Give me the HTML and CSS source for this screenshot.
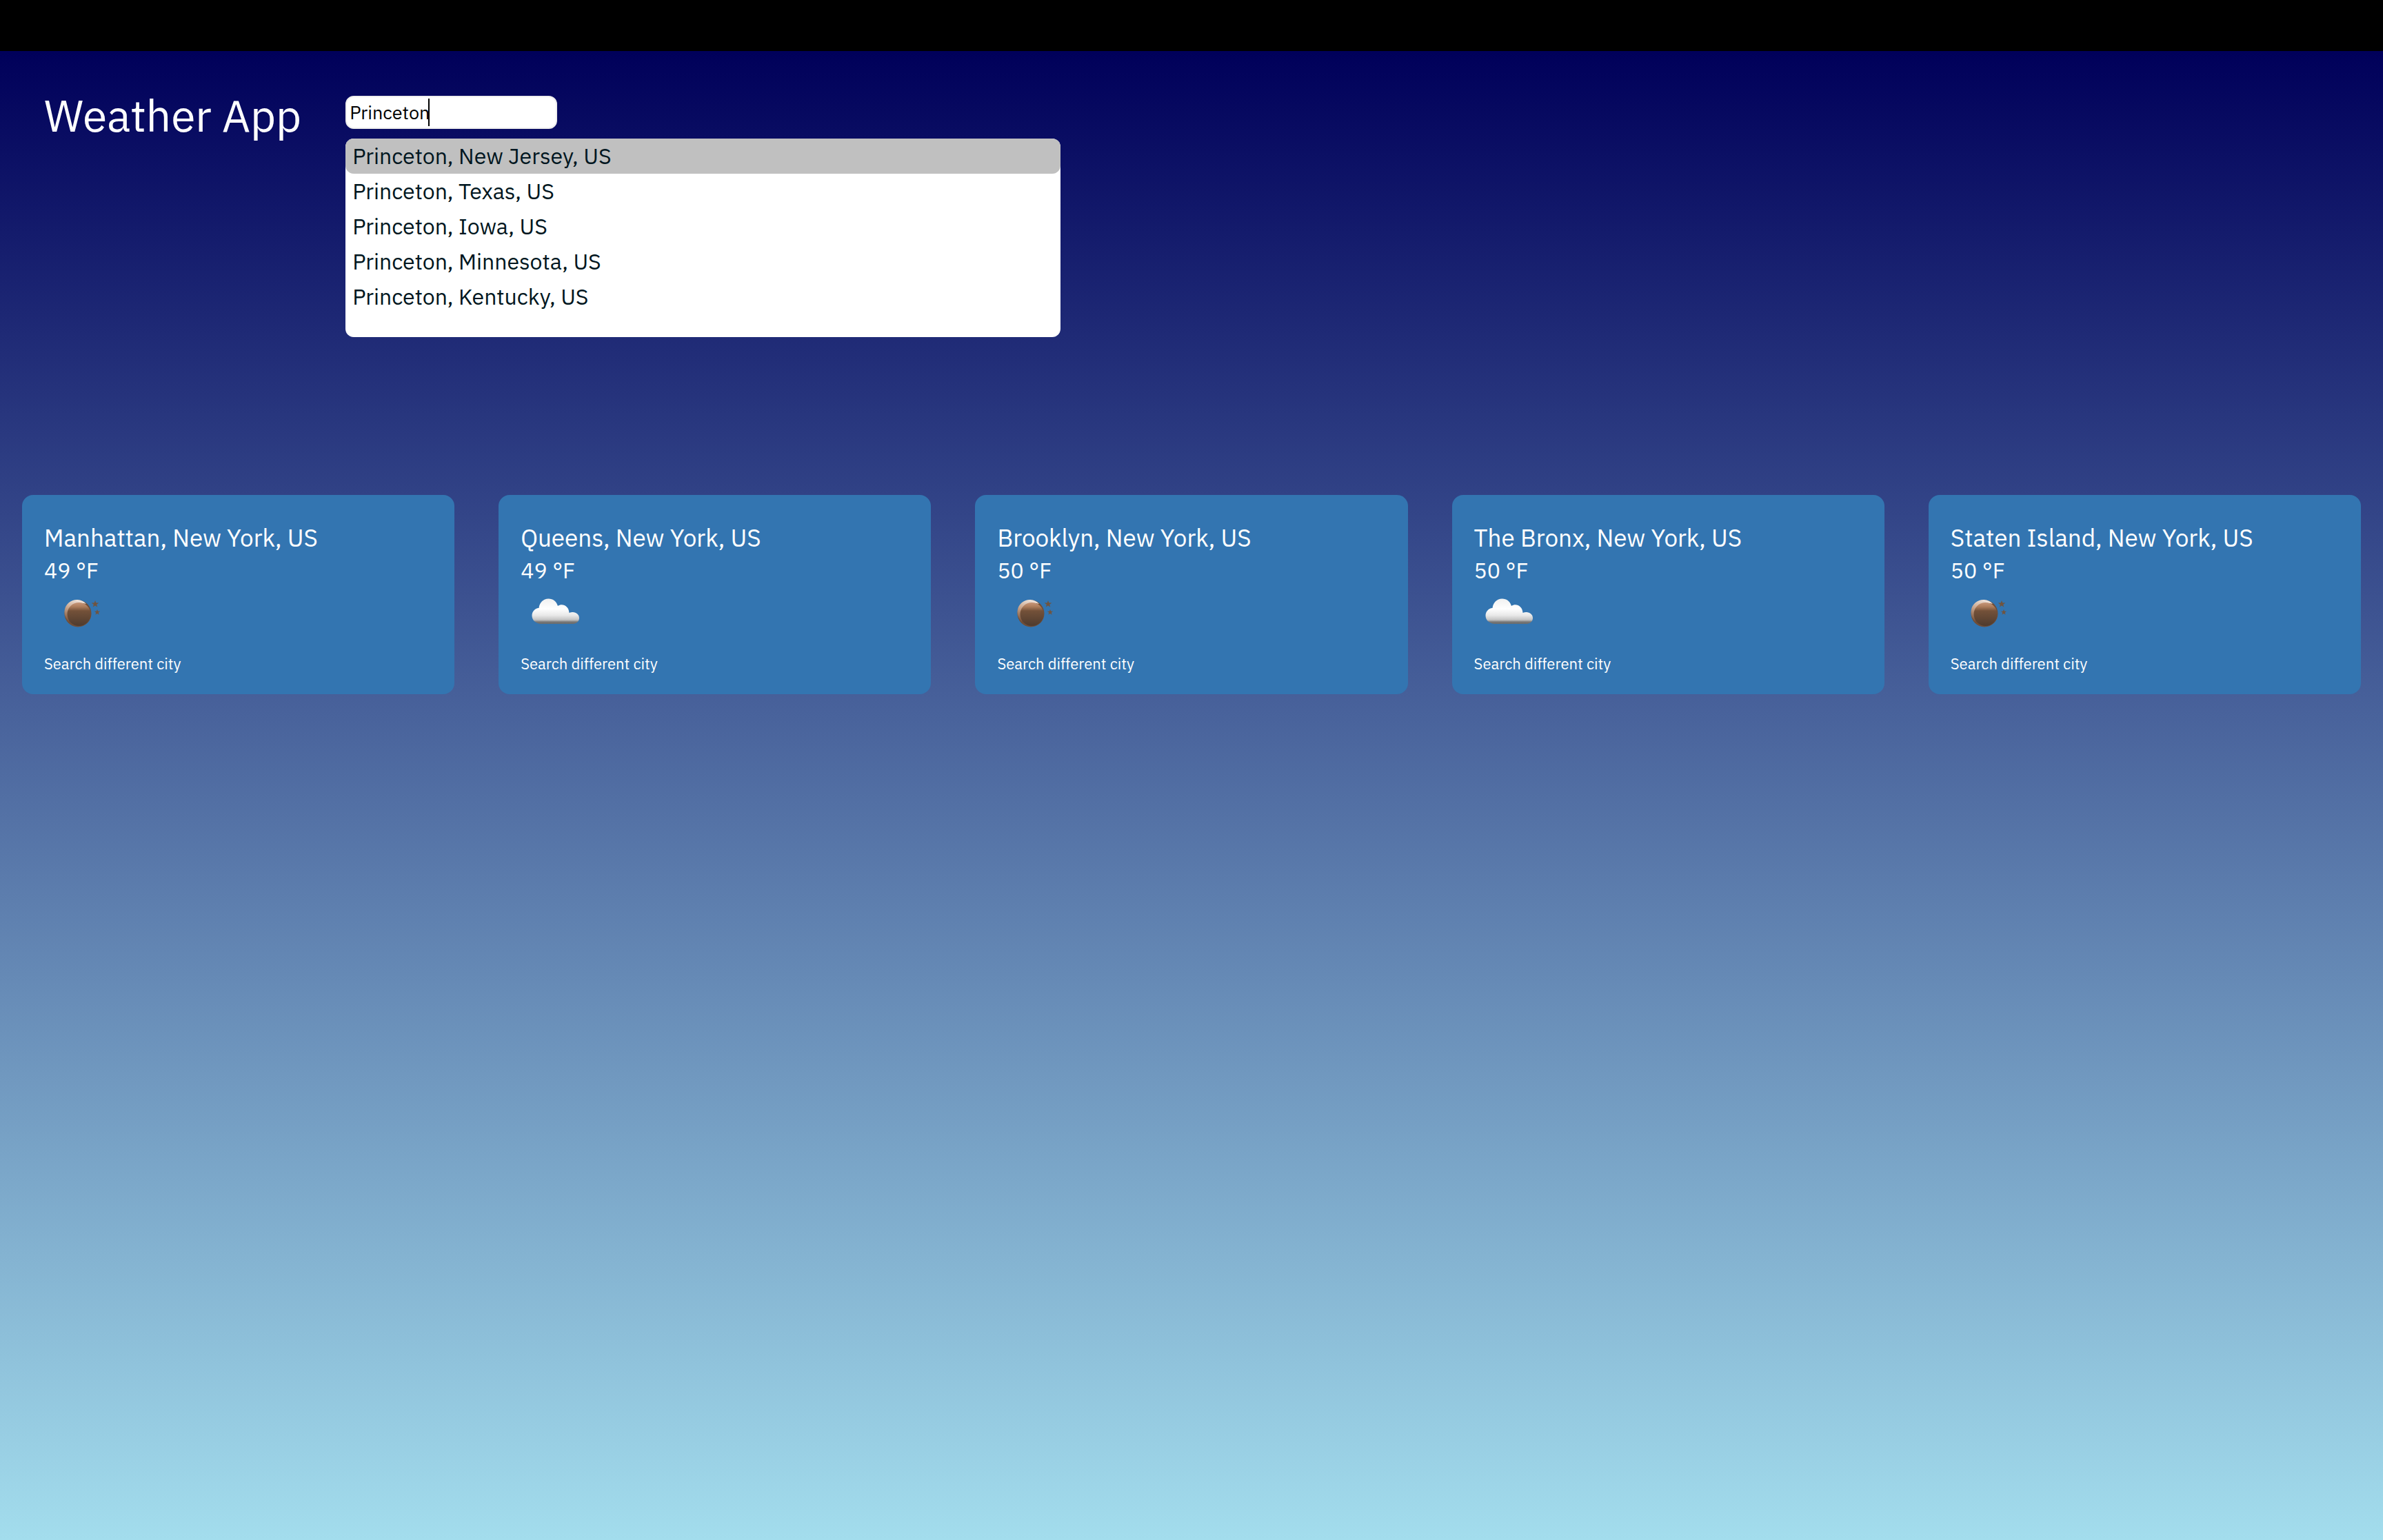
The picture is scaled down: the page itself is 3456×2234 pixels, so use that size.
FILE: index.html
```html
<!DOCTYPE html>
<html lang="en">
<head>
  <meta charset="UTF-8">
  <meta name="viewport" content="width=device-width, initial-scale=1.0">
  <title>Weather App</title>
  <link rel="stylesheet" href="styles.css">
</head>
<body>
  <!-- shared weather icons -->
  <svg class="sprite" aria-hidden="true">
    <defs>
      <linearGradient id="moon-fill" x1="0" y1="0" x2="0" y2="1">
        <stop offset="0" stop-color="#c8977a"/>
        <stop offset="0.18" stop-color="#ac7c5b"/>
        <stop offset="0.36" stop-color="#735139"/>
        <stop offset="1" stop-color="#4f3b2e"/>
      </linearGradient>
      <linearGradient id="moon-shine" x1="0.6" y1="0" x2="0.3" y2="1">
        <stop offset="0" stop-color="#efe4dc"/>
        <stop offset="0.45" stop-color="#c9a58c"/>
        <stop offset="1" stop-color="#7a543b"/>
      </linearGradient>
      <linearGradient id="cloud-fill" gradientUnits="userSpaceOnUse" x1="0" y1="18" x2="0" y2="56">
        <stop offset="0" stop-color="#f0f0f0"/>
        <stop offset="0.4" stop-color="#ffffff"/>
        <stop offset="0.65" stop-color="#e8e8e8"/>
        <stop offset="0.82" stop-color="#c4c4c4"/>
        <stop offset="0.9" stop-color="#777777"/>
        <stop offset="1" stop-color="#666666"/>
      </linearGradient>
    </defs>
    <symbol id="moon" viewBox="0 0 100 80">
      <circle cx="49" cy="40" r="19.500" fill="#6f4d37"/>
      <path d="M34 50A18 18 0 0 1 61 26Q47 22 39 33Q35 40 36 52Q35 52 34 50Z" fill="url(#moon-shine)"/>
      <circle cx="50.500" cy="41" r="17" fill="url(#moon-fill)"/>
      <path d="M74 21l1.300 3.500h4l-3.200 2.400 1.200 3.700-3.300-2.200-3.300 2.200 1.200-3.700-3.200-2.400h4z" fill="#70543f"/>
      <path d="M77 34l1.100 2.800h3l-2.400 2 .9 3-2.600-1.800-2.600 1.800 .9-3-2.400-2h3z" fill="#70543f"/>
    </symbol>
    <symbol id="cloud" viewBox="0 0 100 80">
      <path d="M29 55C21 54 16.500 49 16.500 43C16.500 37 21 32.500 26.500 32C27.500 24 33 18.500 40.500 18.500C47 18.500 52 22.500 54 29C61 24.500 70 29.500 70.500 39C78 36 85 40 85 46.500C85 51 82 54 77 55Z" fill="url(#cloud-fill)"/>
    </symbol>
  </svg>

  <div class="top-bar"></div>

  <div class="app">
    <header class="header">
      <h1 class="title">Weather App</h1>
      <form class="search">
        <input class="search-input" type="text" value="Princeton" aria-label="City" autocomplete="off">
        <span class="caret"></span>
        <ul class="suggestions">
          <li><button type="button" class="suggestion active">Princeton, New Jersey, US</button></li>
          <li><button type="button" class="suggestion">Princeton, Texas, US</button></li>
          <li><button type="button" class="suggestion">Princeton, Iowa, US</button></li>
          <li><button type="button" class="suggestion">Princeton, Minnesota, US</button></li>
          <li><button type="button" class="suggestion">Princeton, Kentucky, US</button></li>
        </ul>
      </form>
    </header>

    <main class="cards">
      <section class="card">
        <h2 class="city">Manhattan, New York, US</h2>
        <p class="temp">49 °F</p>
        <svg class="icon"><use href="#moon"/></svg>
        <button type="button" class="change">Search different city</button>
      </section>
      <section class="card">
        <h2 class="city">Queens, New York, US</h2>
        <p class="temp">49 °F</p>
        <svg class="icon"><use href="#cloud"/></svg>
        <button type="button" class="change">Search different city</button>
      </section>
      <section class="card">
        <h2 class="city">Brooklyn, New York, US</h2>
        <p class="temp">50 °F</p>
        <svg class="icon"><use href="#moon"/></svg>
        <button type="button" class="change">Search different city</button>
      </section>
      <section class="card">
        <h2 class="city">The Bronx, New York, US</h2>
        <p class="temp">50 °F</p>
        <svg class="icon"><use href="#cloud"/></svg>
        <button type="button" class="change">Search different city</button>
      </section>
      <section class="card">
        <h2 class="city">Staten Island, New York, US</h2>
        <p class="temp">50 °F</p>
        <svg class="icon"><use href="#moon"/></svg>
        <button type="button" class="change">Search different city</button>
      </section>
    </main>
  </div>
</body>
</html>
```
FILE: styles.css
```css
* {
  margin: 0;
  padding: 0;
  box-sizing: border-box;
}

body {
  display: flex;
  flex-direction: column;
  min-height: 100vh;
  background: #000;
  color: #fff;
  font-family: "IBM Plex Sans", "Noto Sans", sans-serif;
  font-size: 32px;
}

button {
  border: none;
  background: none;
  color: inherit;
  font: inherit;
  text-align: left;
  cursor: pointer;
}

.sprite {
  position: absolute;
  width: 0;
  height: 0;
}

.top-bar {
  height: 74px;
}

.app {
  flex: 1;
  background: linear-gradient(#00005a, #a3dded);
}

.header {
  display: flex;
  align-items: flex-start;
  gap: 64px;
  padding: 53px 64px 0;
}

.title {
  font-size: 64px;
  font-weight: 400;
  line-height: 80px;
}

.search {
  position: relative;
  padding-top: 12px;
}

.search-input {
  display: block;
  width: 307px;
  height: 48px;
  padding: 0 4px 2px;
  border: 2px solid #eee;
  border-radius: 12px;
  background: #fff;
  color: #000;
  font: inherit;
  font-size: 27px;
  outline: none;
}

.caret {
  position: absolute;
  top: 16px;
  left: 120px;
  width: 2px;
  height: 40px;
  background: #000;
}

.suggestions {
  position: absolute;
  top: 74px;
  left: 0;
  width: 30vw;
  height: 288px;
  border-radius: 12px;
  background: #fff;
  color: #001620;
  list-style: none;
}

.suggestion {
  display: block;
  width: 100%;
  padding: 0 10px 1px;
  border-radius: 12px;
  line-height: 50px;
}

.suggestion.active {
  background: #c0c0c0;
}

.cards {
  display: grid;
  grid-template-columns: repeat(5, 1fr);
  gap: 64px;
  margin-top: 511px;
  padding: 0 32px;
}

.card {
  padding: 38px 32px 27px;
  border-radius: 16px;
  background: #3375b1;
}

.city {
  font-size: 35px;
  font-weight: 400;
  line-height: 48px;
}

.temp {
  line-height: 46px;
}

.icon {
  display: block;
  width: 100px;
  height: 80px;
}

.change {
  display: block;
  margin-top: 16px;
  font-size: 22px;
  line-height: 34px;
}
```
